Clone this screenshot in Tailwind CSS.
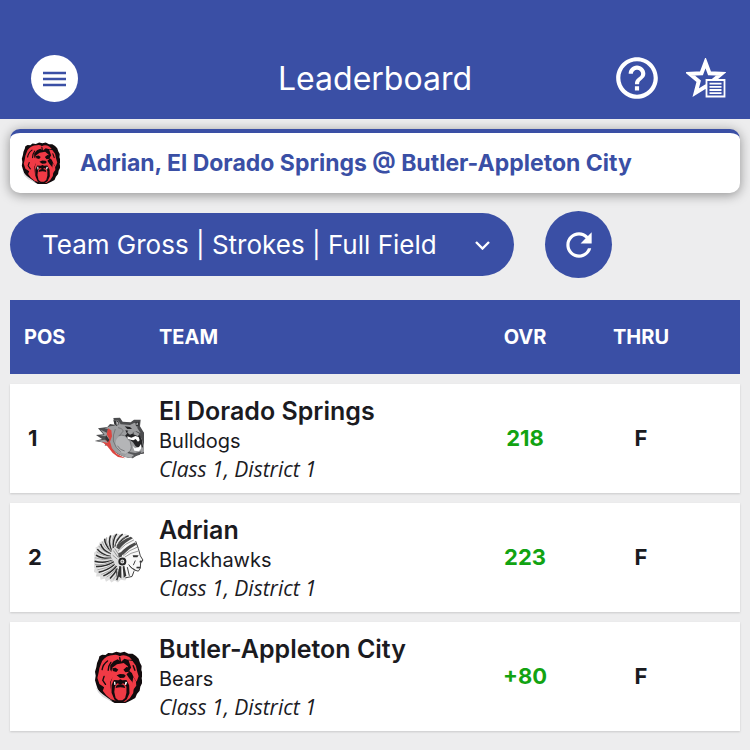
<!DOCTYPE html>
<html lang="en">

<head>
  <meta charset="UTF-8" />
  <meta name="viewport" content="width=device-width, initial-scale=1.0" />
  <title>Leaderboard</title>
  <script src="https://cdn.jsdelivr.net/npm/@tailwindcss/browser@4"></script>
</head>

<body class="min-h-screen bg-[#ededee] font-['Inter',sans-serif] text-[#1b1b1f]">

  <!-- Shared team logo -->
  <svg class="hidden" aria-hidden="true">
    <symbol id="bear" viewBox="30 28 142 156" preserveAspectRatio="none">
      <path fill="#120b0d" d="M46 44l8-5 10 1 8-6 12 1 12-5 12 3 12-3 12 6 12 0 10 7 8 8 4 12 5 10-1 12 4 12-3 12 2 14-6 12-2 12-8 10-5 12-12 7-9 4-12 6-14 2-14-4-14-8-14-10-14-12-8-12-4-12-4-14 2-14-2-12 4-14 2-12 5-12z" />
      <path fill="#f03a45" d="M54 58q12-18 34-18 12-2 18 4 12-8 28 2l8 8-12 0-10-3-10 9-10-7-12 6-10 12 0 14 8 10-2 14-6 12 0 18 6 20 10 18-14-4-14-12-10-14 4-10-14-10-6-18 4-18 2-12z" />
      <path fill="#f03a45" d="M132 56l12 2 10 14 4 18 4 14-6 16-8-12-6-14-10-8 8-8zM84 78l14-10 20-4 12 10 4 16-8 8 8 12 10 12 4 14-2 18-10 16-14 10-24-1-14-12-6-22 2-24 4-12-4-14z" />
      <path fill="#f03a45" d="M146 106l8 12 1 14-9 12-3-16z" />
      <path fill="#120b0d" d="M84 80l10-2 8 6-6 7-10-3zM138 78l-12-2-9 8 6 8 11-2zM97 101l10-4 12 1 5 4-5 6-12 1z" />
      <path fill="#120b0d" d="M82 130l7-15 13 1 6-3 6 3 12-1 8 16 1 24-8 18-11 8-16 0-10-8-8-20z" />
      <path fill="#f03a45" d="M92 134q4-8 8-9l8 4 8-4q6 2 10 10l0 18-4 16-8 7-12 0-8-7-4-18z" />
      <path fill="#120b0d" d="M96 132q12-8 24 0l2 7q-14-5-28 0z" />
      <path fill="#fff" d="M89 120l4 0 1 9-4 1zM123 120l5 1-3 9-4-1z" />
      <path fill="#dcdcdf" d="M34 134l8 12 14 12 14 10 14 10-10-2-18-10-14-14z" />
      <path fill="none" stroke="#120b0d" stroke-width="4" stroke-linecap="round" d="M70 58q-14 10-16 26M80 62q-8 10-8 24M60 104l-4 12 8 12M106 48l2 12M146 72l5 14" />
    </symbol>
  </svg>

  <!-- App bar -->
  <header class="grid h-[119px] grid-cols-[1fr_auto_1fr] items-end bg-[#3a4fa5] px-6 pb-4 text-white">
    <button type="button" aria-label="Menu" class="mb-px ml-[7px] flex size-[47px] items-center justify-center rounded-full bg-white">
      <svg class="h-4 w-[23px]" viewBox="0 0 23 16" stroke="#3a4fa5" stroke-width="2.4">
        <path d="M0 2h23M0 8h23M0 14h23" />
      </svg>
    </button>
    <h1 class="mb-1 text-[32px] leading-10">Leaderboard</h1>
    <div class="flex items-center justify-end gap-6">
      <button type="button" aria-label="Help">
        <svg class="size-[50px]" viewBox="0 0 24 24" fill="white">
          <path d="M11 18h2v-2h-2v2zm1-16C6.480 2 2 6.480 2 12s4.480 10 10 10 10-4.480 10-10S17.520 2 12 2zm0 18c-4.410 0-8-3.590-8-8s3.590-8 8-8 8 3.590 8 8-3.590 8-8 8zm0-14c-2.210 0-4 1.790-4 4h2c0-1.100.9-2 2-2s2 .9 2 2c0 2-3 1.750-3 5h2c0-2.250 3-2.500 3-5 0-2.210-1.790-4-4-4z" />
        </svg>
      </button>
      <button type="button" aria-label="Favorite leaderboards">
        <svg class="size-10" viewBox="0 0 40 40">
          <path fill="none" stroke="white" stroke-width="4" d="M19.500 4.500l4 10.700 11.800.6-9 7.400 3 11.500-9.800-6.200-9.800 6.200 3-11.500-9-7.400 11.800-.6z" />
          <path fill="#3a4fa5" stroke="white" stroke-width="1.800" d="M20.500 22h18v16.500h-18z" />
          <path stroke="white" stroke-width="1.800" d="M23.500 25.600h12M23.500 28.800h12M23.500 32h12M23.500 35.200h12" />
        </svg>
      </button>
    </div>
  </header>

  <main class="px-[10px] pt-[10px]">
    <!-- Event -->
    <a href="#" class="flex h-16 items-center gap-5 rounded-[10px] border-t-4 border-[#3a4fa5] bg-white pl-[11px] text-[#3a4fa5] shadow-[0_2px_12px_rgba(0,0,0,0.4)]">
      <svg class="h-[42px] w-[39px]" role="img" aria-label="Bears"><use href="#bear" /></svg>
      <span class="text-[23px] font-bold">Adrian, El Dorado Springs @ Butler-Appleton City</span>
    </a>

    <!-- Filter -->
    <div class="mt-[18px] flex items-center gap-[31px]">
      <div class="relative">
        <select aria-label="Leaderboard type" class="h-[63px] w-[504px] appearance-none rounded-full bg-[#3a4fa5] pr-16 pl-8 text-[26px] text-white">
          <option>Team Gross | Strokes | Full Field</option>
        </select>
        <svg class="pointer-events-none absolute top-7 right-6 h-[9px] w-[15px]" viewBox="0 0 15 9" fill="none" stroke="white" stroke-width="2.400">
          <path d="M1 1l6.500 6.500L14 1" />
        </svg>
      </div>
      <button type="button" aria-label="Refresh" class="flex size-[67px] items-center justify-center rounded-full bg-[#3a4fa5]">
        <svg class="size-[38px]" viewBox="0 0 24 24" fill="white">
          <path d="M17.650 6.350C16.200 4.900 14.210 4 12 4c-4.420 0-7.990 3.580-7.990 8s3.570 8 7.990 8c3.730 0 6.840-2.550 7.730-6h-2.080c-.82 2.330-3.040 4-5.650 4-3.310 0-6-2.690-6-6s2.690-6 6-6c1.660 0 3.140.69 4.220 1.780L13 11h7V4l-2.350 2.350z" />
        </svg>
      </button>
    </div>

    <!-- Standings -->
    <table class="mt-3 w-full table-fixed border-separate border-spacing-x-0 border-spacing-y-[10px]">
      <thead class="bg-[#3a4fa5] text-left text-xl text-white">
        <tr class="h-[74px]">
          <th scope="col" class="w-[84px] pl-[14px] font-bold">POS</th>
          <th class="w-[65px]"></th>
          <th scope="col" class="font-bold">TEAM</th>
          <th scope="col" class="w-[116px] text-center font-bold">OVR</th>
          <th scope="col" class="w-[116px] text-center font-bold">THRU</th>
          <th class="w-[41px]"></th>
        </tr>
      </thead>
      <tbody class="text-[22px]">
        <tr class="h-[109px] bg-white shadow-[0_1px_2px_rgba(0,0,0,0.15)]">
          <td class="pl-[18px] font-bold">1</td>
          <td>
            <svg class="h-[46px] w-[50px]" viewBox="26 32 150 128" role="img" aria-label="Bulldogs">
              <path fill="#4c4d4f" d="M28 102l22-6-18-12 22-2-16-18 28-4 8-9 14 2-4-20 20-1 8 12 24 2 10-8 20 0-2 20 10 16 10 14 7 24-3 22-14 6-14 2-18 12-24-4-20-8-16-12-14-16-10 2 4-8z" />
              <path fill="#9d9ea0" d="M36 101l22-3 14 8-10-18-18-2 14-2-12-16 20 10 2-12-10-2 16-6 14-2-2-16 12 0 8 12 28 2 12-6 12-1-2 16 10 16-12-6-10 2 10 8 14 10 8 22 0 20-18 6-20 12-22-4-20-10-16-12-14-16z" />
              <path fill="#dc4640" d="M68 64l10 6 2 18-6 16 6 20 14 16 26 14-22-4-16-12-16-20-16-14 18 4-8-10 12-2-8-14z" />
              <path fill="#333436" d="M62 84l10 14-4 8-8-10zM84 40l14 1 4 10-9 6-6-6zM150 46l12-2-2 14-8 0z" />
              <path fill="#b4b5b7" d="M92 42l6 4 2 6-6 2zM154 48l4-1-1 7-4 0zM92 100q12-22 32-8 14 10 14 26t-14 22q-18 2-28-16-8-10-4-24z" />
              <path fill="none" stroke="#77787a" stroke-width="3" d="M90 66q-8 18-6 36 6 22 22 32M98 62q12 0 16 10l-12 14M124 92q14 10 14 26t-14 22M96 116q8 14 22 16M100 86q8-4 18 0" />
              <path fill="#242426" d="M120 70l16 2 10 6 18 8 6 14 3 20-8 6-14-8-8-12-16-12-8-8 6-6zM118 58l16 2 6 6-14 0z" />
              <path fill="#9d9ea0" d="M128 70l12 1 4 8-10 4-8-6zM148 72l14 8-4 8-14-6z" />
              <path fill="#fff" d="M126 88l12 4 12-5 10 3 3 10-5 4-7-8-7 4-8-2-9-3zM142 116l7 8 12-4 6-9 2 12-8 10-14-2z" />
              <path fill="#555658" d="M128 134l22 4 18-5-4 10-20 6-18 2z" />
              <path fill="#a9aaac" d="M126 138l20 6-10 8-18-4z" />
            </svg>
          </td>
          <td>
            <p class="text-[25px] leading-[30px] font-semibold">El Dorado Springs</p>
            <p class="text-xl leading-[30px]">Bulldogs</p>
            <p class="font-['Open_Sans',sans-serif] text-[21px] leading-[26px] italic">Class 1, District 1</p>
          </td>
          <td class="text-center font-bold text-[#12a312]">218</td>
          <td class="text-center font-bold">F</td>
          <td></td>
        </tr>
        <tr class="h-[109px] bg-white shadow-[0_1px_2px_rgba(0,0,0,0.15)]">
          <td class="pl-[18px] font-bold">2</td>
          <td>
            <svg class="h-[51px] w-[50px]" viewBox="28 24 150 150" role="img" aria-label="Blackhawks">
              <path fill="#dedede" d="M132 34l-10-6-12 4-12-5-8 6-14-1-6 8-12 2-4 10-10 2-2 10-10 6 4 8-10 8 4 10-8 8 6 10-6 10 8 8-4 10 10 4-2 10 12 0 2 10 12-4 4 10 10-6 6 8 10-6 10 6 8-8 14 2 6-12 16-2 4-8-2-12 2-12 6-8-8-14-2-22-10-18-12-10z" />
              <path fill="none" stroke="#2c2c2c" stroke-width="4.500" d="M132 34Q112 40 98 64M114 29Q98 40 90 66M96 28Q84 44 86 70M78 33Q70 50 80 76M60 43q0 18 20 38M48 58q4 18 30 30M38 74q12 16 40 22M34 92q18 12 46 9M30 110q26 7 54-2M34 126q28 1 54-14M42 143q26-5 48-23M56 154q22-9 40-29M76 162q14-13 22-30M96 167q8-16 8-32" />
              <path fill="none" stroke="#f7f7f7" stroke-width="2.500" d="M122 32Q104 40 94 62M104 30Q90 42 88 66M86 34Q76 48 82 72M70 40Q64 54 78 78M56 54q4 16 22 30M46 68q8 16 30 22M40 86q14 12 38 10M35 102q22 8 46 0M35 118q26 4 50-10M42 132q26-2 48-18M52 146q24-6 42-26M68 155q18-10 30-28M88 162q12-14 14-32" />
              <path fill="none" stroke="#8a8a8a" stroke-width="2" d="M124 36Q108 42 97 63M108 30Q94 42 89 66M90 30Q79 46 84 72M66 38Q62 54 79 79M52 50q4 18 26 32M42 64q10 16 34 24M36 82q16 14 42 14M31 100q24 10 50 2M31 120q28 4 54-12M38 136q28-4 52-20M50 150q26-8 44-28M66 158q18-11 30-28M86 165q13-15 16-32" />
              <path fill="#f8f8f8" d="M102 66l34-28 16 10 8 22 6 22 9 15-8 5 0 18-6 10-14-1-6 18-26 0-12-30z" />
              <path fill="#4a4a4a" d="M94 68q18-22 44-31l7 4q-26 12-42 34zM108 84q16-18 42-30l6 6q-24 12-42 32zM100 86l12-4 0 14-10 4z" />
              <path fill="none" stroke="#888" stroke-width="2.500" d="M100 80q22-24 48-34M116 94q18-18 42-26M120 98q18-14 40-18M86 78l14 20M90 72l12 18M84 92l14 12" />
              <circle cx="113" cy="111" r="9" fill="#eee" stroke="#252525" stroke-width="6" />
              <circle cx="113" cy="111" r="3" fill="#777" />
              <path fill="#333" d="M144 92l18 0-4 6-12 0zM156 127l12 0-3 5-10-1zM166 108l8 2-2 4-8-1zM104 124l6 2 0 36-10-8zM114 126l5-2 6 30-8 6z" />
              <path fill="none" stroke="#444" stroke-width="3" d="M153 50l8 22 6 22 8 13-7 5-1 19-6 9-14-4-12-12M148 140l-6 16-20 4M132 120l8 10 12 6M152 108l-6 14M94 132l4 28M128 128l6 26" />
            </svg>
          </td>
          <td>
            <p class="text-[25px] leading-[30px] font-semibold">Adrian</p>
            <p class="text-xl leading-[30px]">Blackhawks</p>
            <p class="font-['Open_Sans',sans-serif] text-[21px] leading-[26px] italic">Class 1, District 1</p>
          </td>
          <td class="text-center font-bold text-[#12a312]">223</td>
          <td class="text-center font-bold">F</td>
          <td></td>
        </tr>
        <tr class="h-[109px] bg-white shadow-[0_1px_2px_rgba(0,0,0,0.15)]">
          <td></td>
          <td><svg class="h-[52px] w-12" role="img" aria-label="Bears"><use href="#bear" /></svg></td>
          <td>
            <p class="text-[25px] leading-[30px] font-semibold">Butler-Appleton City</p>
            <p class="text-xl leading-[30px]">Bears</p>
            <p class="font-['Open_Sans',sans-serif] text-[21px] leading-[26px] italic">Class 1, District 1</p>
          </td>
          <td class="text-center font-bold text-[#12a312]">+80</td>
          <td class="text-center font-bold">F</td>
          <td></td>
        </tr>
      </tbody>
    </table>
  </main>

</body>

</html>
